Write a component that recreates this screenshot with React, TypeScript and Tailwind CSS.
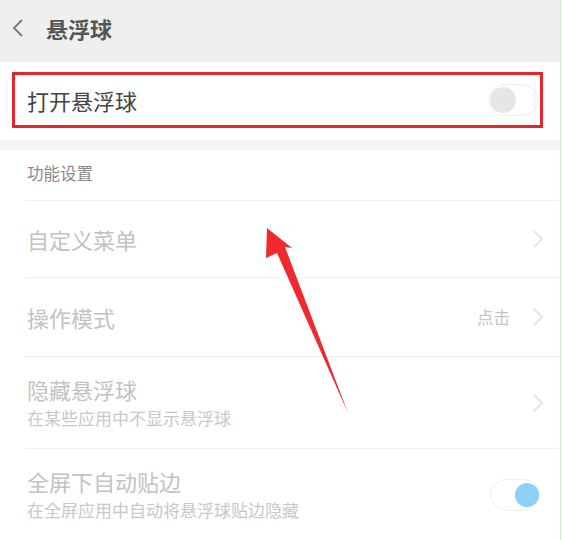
import React from "react";

const font = {
  fontFamily: '"Noto Sans CJK SC", "Noto Sans", sans-serif',
};

const Chevron = () => (
  <svg width="12" height="20" viewBox="0 0 12 20" className="shrink-0">
    <path d="M2 2 L10 10 L2 18" fill="none" stroke="#dedede" strokeWidth="1.6" />
  </svg>
);

const Toggle = ({ on }: { on: boolean }) => (
  <div className="relative w-[50px] h-[32px] rounded-full border border-[#f0f0f0] bg-white">
    <div
      className={
        on
          ? "absolute right-[0px] top-[3px] w-[24px] h-[24px] rounded-full bg-[#8dcff5]"
          : "absolute left-[1px] top-[2px] w-[26px] h-[26px] rounded-full bg-[#e6e6e6]"
      }
    />
  </div>
);

const Row = ({
  title,
  sub,
  right,
  h,
}: {
  title: string;
  sub?: string;
  right: React.ReactNode;
  h: string;
}) => (
  <div className={`flex items-center ml-[25px] border-t border-[#f1f1f1] ${h}`}>
    <div className="flex-1 pl-[2px]">
      <div className="text-[22px] leading-[28px] text-[#c2c2c2]">{title}</div>
      {sub && (
        <div className="text-[17px] leading-[24px] text-[#c8c8c8] mt-[3px]">{sub}</div>
      )}
    </div>
    <div className="flex items-center gap-[22px] pr-[16px]">{right}</div>
  </div>
);

export default function App() {
  return (
    <div className="relative w-[562px] h-[540px] overflow-hidden bg-white" style={font}>
      <div className="w-[561px] h-full border-r border-[#cdeccf] flex flex-col">
        <div className="h-[62px] bg-[#efefef] flex items-center pl-[11px] pb-[6px] gap-[22px]">
          <svg width="13" height="18" viewBox="0 0 13 18">
            <path d="M11 1 L3 9 L11 17" fill="none" stroke="#777" strokeWidth="1.8" />
          </svg>
          <span className="text-[22px] font-bold text-[#555] leading-none">悬浮球</span>
        </div>
        <div className="h-[78px] pt-[10px] pl-[12px] pr-[17px]">
          <div className="h-[56px] border-[3px] border-[#e4262e] flex items-center justify-between pl-[12px] pr-[2px]">
            <span className="text-[22px] text-[#444]">打开悬浮球</span>
            <Toggle on={false} />
          </div>
        </div>
        <div className="h-[10px] bg-[#f5f5f5]" />
        <div className="h-[50px] flex items-center pl-[27px] pb-[4px] text-[16.5px] text-[#8a8a8a]">
          功能设置
        </div>
        <Row title="自定义菜单" h="h-[77px]" right={<Chevron />} />
        <Row
          title="操作模式"
          h="h-[79px]"
          right={
            <>
              <span className="text-[16.5px] text-[#c6c6c6]">点击</span>
              <Chevron />
            </>
          }
        />
        <Row
          title="隐藏悬浮球"
          sub="在某些应用中不显示悬浮球"
          h="h-[92px]"
          right={<Chevron />}
        />
        <Row
          title="全屏下自动贴边"
          sub="在全屏应用中自动将悬浮球贴边隐藏"
          h="h-[92px]"
          right={
            <div className="mr-[4px]">
              <Toggle on={true} />
            </div>
          }
        />
      </div>
      <svg
        className="absolute left-0 top-0 pointer-events-none"
        width="562"
        height="540"
        viewBox="0 0 562 540"
      >
        <polygon
          points="267,228 292,248 285,247 348,413 277,253 266,258"
          fill="#f0292e"
        />
      </svg>
    </div>
  );
}
